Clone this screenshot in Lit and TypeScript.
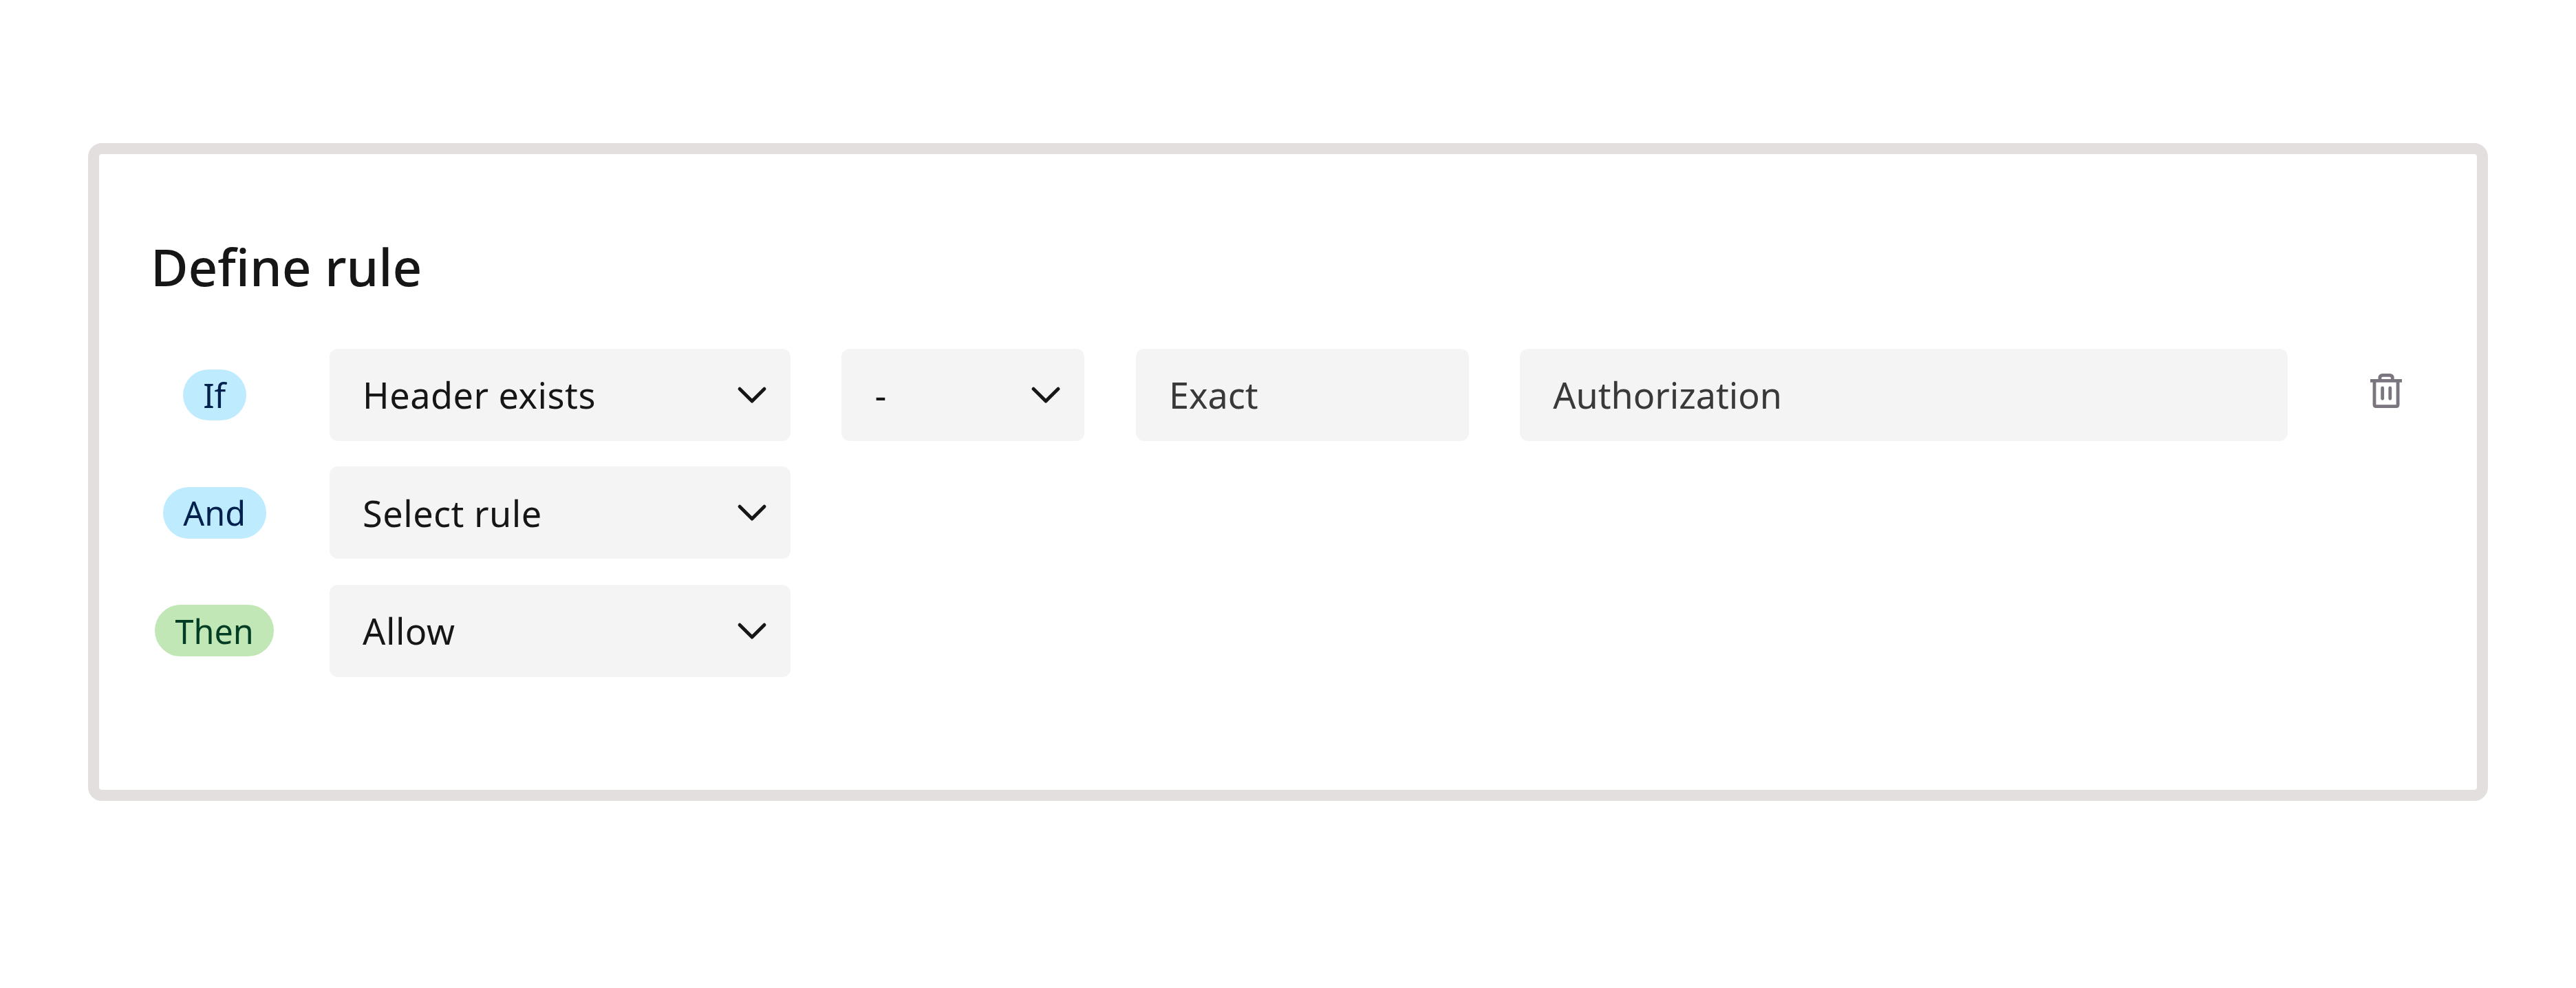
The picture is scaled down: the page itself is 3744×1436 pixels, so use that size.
import { LitElement, html, css } from "lit";
import { customElement, property } from "lit/decorators.js";
import { classMap } from "lit/directives/class-map.js";

@customElement("rule-tag")
export class RuleTag extends LitElement {
  @property() tone: "blue" | "green" = "blue";

  static styles = css`
    :host {
      display: flex;
      justify-content: center;
    }
    .tag {
      display: flex;
      align-items: center;
      box-sizing: border-box;
      height: 74.7px;
      padding: 0 29.6px;
      border-radius: 37.35px;
      font-size: 48.5px;
      line-height: 66px;
      white-space: nowrap;
    }
    .blue {
      background: #bfebff;
      color: #00204d;
    }
    .green {
      background: #c0e7b5;
      color: #003d24;
    }
  `;

  render() {
    return html`<span
      class=${classMap({ tag: true, blue: this.tone === "blue", green: this.tone === "green" })}
      ><slot></slot
    ></span>`;
  }
}

@customElement("rule-select")
export class RuleSelect extends LitElement {
  static styles = css`
    :host {
      display: block;
    }
    .box {
      display: flex;
      align-items: center;
      justify-content: space-between;
      box-sizing: border-box;
      height: 134px;
      padding: 0 28px 0 48.4px;
      border-radius: 12px;
      background: #f4f4f4;
      color: #161616;
      font-size: 52.2px;
      line-height: 71px;
      letter-spacing: 0.5px;
      white-space: nowrap;
    }
    .chevron {
      flex: none;
      width: 56px;
      height: 56px;
      fill: none;
      stroke: currentColor;
      stroke-width: 5;
      stroke-linecap: round;
      stroke-linejoin: round;
    }
  `;

  render() {
    return html`<div class="box">
      <slot></slot>
      <svg class="chevron" viewBox="0 0 56 56"><path d="M10.1 19.2 28 37 45.9 19.2" /></svg>
    </div>`;
  }
}

@customElement("rule-field")
export class RuleField extends LitElement {
  static styles = css`
    :host {
      display: block;
    }
    .box {
      display: flex;
      align-items: center;
      box-sizing: border-box;
      height: 134px;
      padding: 0 48.2px;
      border-radius: 12px;
      background: #f4f4f4;
      color: #393939;
      font-size: 52.1px;
      line-height: 71px;
      white-space: nowrap;
    }
  `;

  render() {
    return html`<div class="box"><slot></slot></div>`;
  }
}

@customElement("app-root")
export class AppRoot extends LitElement {
  static styles = css`
    :host {
      display: block;
      box-sizing: border-box;
      height: 1436px;
      padding: 208px 128px 272px;
      background: #ffffff;
      font-family: "Noto Sans", sans-serif;
    }
    .card {
      box-sizing: border-box;
      height: 956px;
      padding: 112.4px 63.3px 0 75px;
      border: 16px solid #e2dfde;
      border-radius: 20px;
    }
    .title {
      margin: 0 0 68.6px;
      color: #161616;
      font-size: 74.6px;
      font-weight: 500;
      line-height: 102px;
    }
    .rows {
      display: grid;
      gap: 37.3px;
    }
    .row {
      display: grid;
      grid-template-columns: 185.4px 670px 353.5px 484px 1116px 1fr;
      column-gap: 74.3px;
      align-items: center;
    }
    .remove {
      display: flex;
      justify-content: center;
      padding: 0 0 11.2px;
      border: 0;
      background: none;
      color: #7a757e;
    }
    .trash {
      width: 60px;
      height: 60px;
      fill: none;
      stroke: currentColor;
      stroke-width: 4.8;
      stroke-linejoin: round;
    }
    .round {
      stroke-linecap: round;
    }
  `;

  render() {
    return html`
      <section class="card">
        <h1 class="title">Define rule</h1>
        <div class="rows">
          <div class="row">
            <rule-tag>If</rule-tag>
            <rule-select>Header exists</rule-select>
            <rule-select>-</rule-select>
            <rule-field>Exact</rule-field>
            <rule-field>Authorization</rule-field>
            <button class="remove" aria-label="Delete">
              <svg class="trash" viewBox="0 0 60 60">
                <path d="M7 15.3H53" />
                <path d="M13 15.3V50.3Q13 52.7 15.4 52.7H44.7Q47.1 52.7 47.1 50.3V15.3" />
                <path d="M20.9 15.3V11.5Q20.9 7.4 25 7.4H35.2Q39.3 7.4 39.3 11.5V15.3" />
                <path class="round" d="M24.7 26V41.3M35.8 26V41.3" />
              </svg>
            </button>
          </div>
          <div class="row">
            <rule-tag>And</rule-tag>
            <rule-select>Select rule</rule-select>
          </div>
          <div class="row">
            <rule-tag tone="green">Then</rule-tag>
            <rule-select>Allow</rule-select>
          </div>
        </div>
      </section>
    `;
  }
}
